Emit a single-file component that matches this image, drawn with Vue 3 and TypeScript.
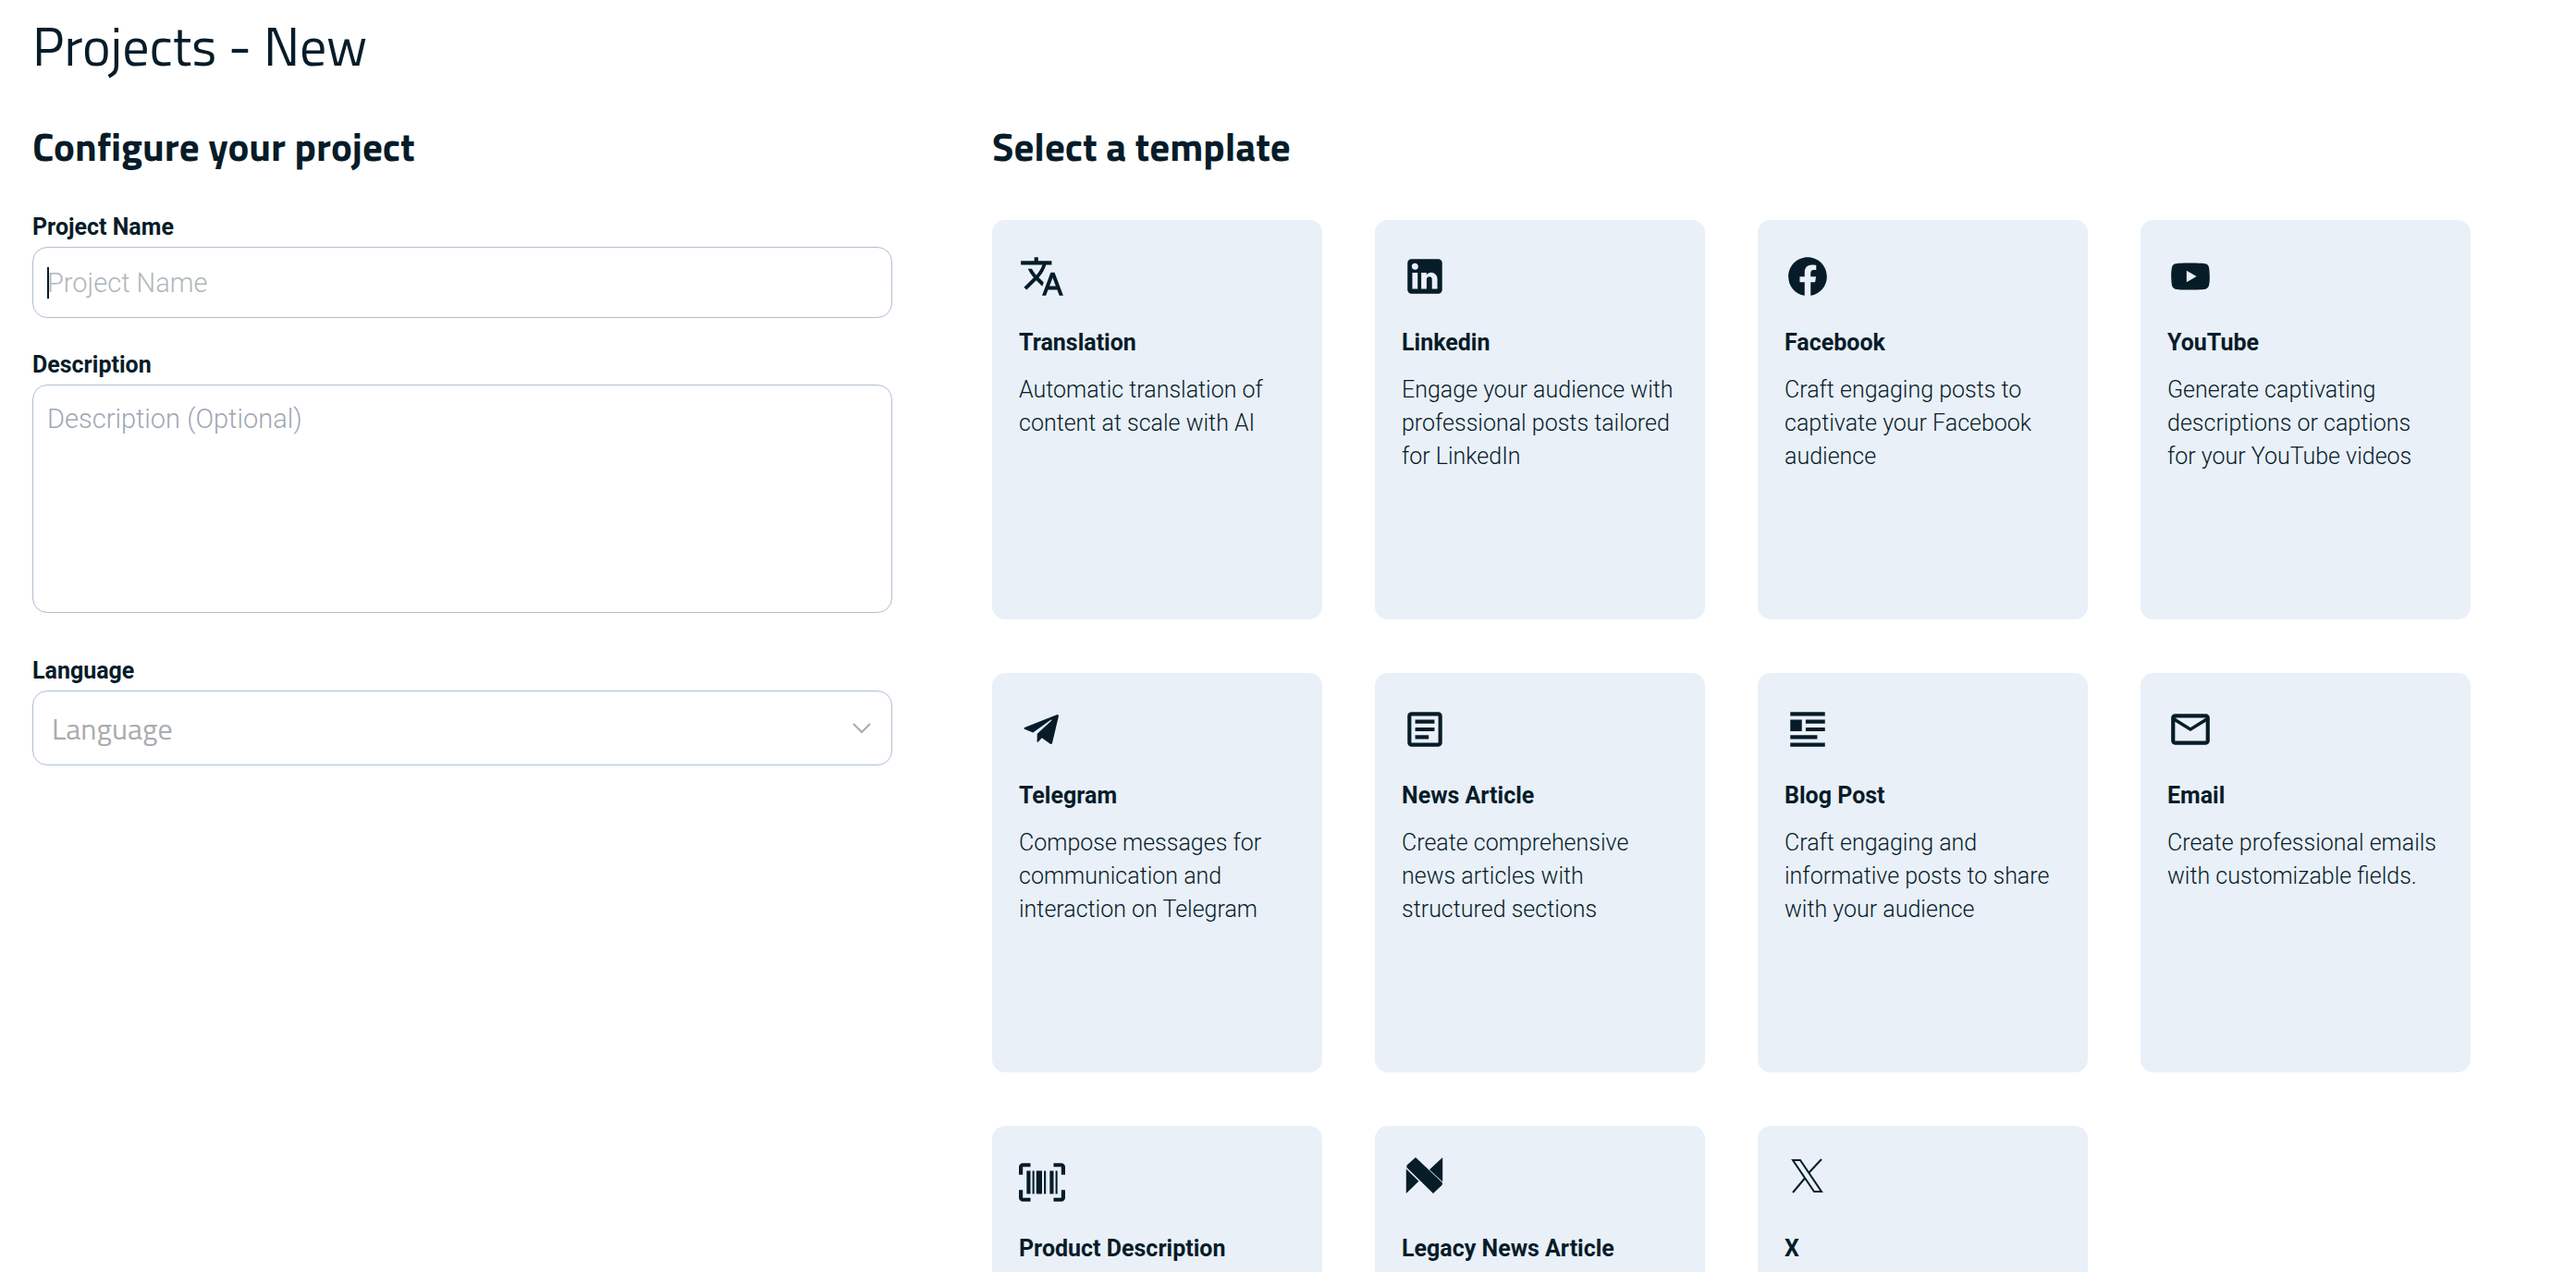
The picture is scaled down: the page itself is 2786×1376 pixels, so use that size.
<script setup lang="ts">
import { ref } from 'vue'

interface Template {
  name: string
  text: string
  icon: string
}

const projectName = ref('')
const description = ref('')
const language = ref('')
const selected = ref('')

const templates: Template[] = [
  { name: 'Translation', text: 'Automatic translation of content at scale with AI', icon: 'translate' },
  { name: 'Linkedin', text: 'Engage your audience with professional posts tailored for LinkedIn', icon: 'linkedin' },
  { name: 'Facebook', text: 'Craft engaging posts to captivate your Facebook audience', icon: 'facebook' },
  { name: 'YouTube', text: 'Generate captivating descriptions or captions for your YouTube videos', icon: 'youtube' },
  { name: 'Telegram', text: 'Compose messages for communication and interaction on Telegram', icon: 'telegram' },
  { name: 'News Article', text: 'Create comprehensive news articles with structured sections', icon: 'article' },
  { name: 'Blog Post', text: 'Craft engaging and informative posts to share with your audience', icon: 'blog' },
  { name: 'Email', text: 'Create professional emails with customizable fields.', icon: 'email' },
  { name: 'Product Description', text: '', icon: 'barcode' },
  { name: 'Legacy News Article', text: '', icon: 'legacy' },
  { name: 'X', text: '', icon: 'x' },
]

// Glyphs on a 24-unit grid
const paths: Record<string, string> = {
  translate:
    'M12.87 15.07l-2.54-2.51.03-.03A17.52 17.52 0 0 0 14.07 6H17V4h-7V2H8v2H1v2h11.17C11.5 7.92 10.44 9.75 9 11.35 8.07 10.32 7.3 9.19 6.69 8h-2c.73 1.63 1.73 3.17 2.98 4.56l-5.09 5.02L4 19l5-5 3.11 3.11.76-2.04M18.5 10h-2L12 22h2l1.12-3h4.75L21 22h2l-4.5-12m-2.62 7l1.62-4.33L19.12 17h-3.24z',
  linkedin:
    'M19 3a2 2 0 0 1 2 2v14a2 2 0 0 1-2 2H5a2 2 0 0 1-2-2V5a2 2 0 0 1 2-2h14m-.5 15.5v-5.3a3.26 3.26 0 0 0-3.26-3.26c-.85 0-1.84.52-2.32 1.3v-1.11h-2.79v8.37h2.79v-4.93c0-.77.62-1.4 1.39-1.4a1.4 1.4 0 0 1 1.4 1.4v4.93h2.79M6.88 8.56a1.68 1.68 0 0 0 1.68-1.68c0-.93-.75-1.69-1.68-1.69a1.69 1.69 0 0 0-1.69 1.69c0 .93.76 1.68 1.69 1.68m1.39 9.94v-8.37H5.5v8.37h2.77z',
  facebook:
    'M12 2.04C6.5 2.04 2 6.53 2 12.06c0 5 3.66 9.15 8.44 9.9v-7H7.9v-2.9h2.54V9.85c0-2.51 1.49-3.89 3.78-3.89 1.09 0 2.23.19 2.23.19v2.47h-1.26c-1.24 0-1.63.77-1.63 1.56v1.88h2.78l-.45 2.9h-2.33v7a10 10 0 0 0 8.44-9.9c0-5.53-4.5-10.02-10-10.02z',
  youtube:
    'M10 15l5.19-3L10 9v6m11.56-7.83c.13.47.22 1.1.28 1.9.07.8.1 1.49.1 2.09L22 12c0 2.19-.16 3.8-.44 4.83-.25.9-.83 1.48-1.73 1.73-.47.13-1.33.22-2.65.28-1.3.07-2.49.1-3.59.1L12 19c-4.19 0-6.8-.16-7.83-.44-.9-.25-1.48-.83-1.73-1.73-.13-.47-.22-1.1-.28-1.9-.07-.8-.1-1.49-.1-2.09L2 12c0-2.19.16-3.8.44-4.83.25-.9.83-1.48 1.73-1.73.47-.13 1.33-.22 2.65-.28 1.3-.07 2.49-.1 3.59-.1L12 5c4.19 0 6.8.16 7.83.44.9.25 1.48.83 1.73 1.73z',
  telegram:
    'M19.6 4.4L2.9 11q-.7.4 0 .9l4.4 1.8 9.2-6.6q.9-.5.3.4L9.5 14.3l-.1 4q.1.7.6.2l1.9-2.1 4.4 3.1q.8.4 1-.4l3.3-14q.1-1-1-.7z',
  article:
    'M19 5v14H5V5h14m0-2H5c-1.1 0-2 .9-2 2v14c0 1.1.9 2 2 2h14c1.1 0 2-.9 2-2V5c0-1.1-.9-2-2-2m-5 14H7v-2h7v2m3-4H7v-2h10v2m0-4H7V7h10v2z',
  blog: 'M3 7h6v6H3V7m0-4h18v2H3V3m8 4h10v2H11V7m0 4h10v2H11v-2m-8 4h14v2H3v-2m0 4h18v2H3v-2z',
  email:
    'M22 6c0-1.1-.9-2-2-2H4c-1.1 0-2 .9-2 2v12c0 1.1.9 2 2 2h16c1.1 0 2-.9 2-2V6m-2 0l-8 5-8-5h16m0 12H4V8l8 5 8-5v10z',
  barcode:
    'M4 6h2v12H4V6m3 0h1v12H7V6m2 0h3v12H9V6m4 0h1v12h-1V6m3 0h2v12h-2V6m3 0h1v12h-1V6M2 4v4H0V4a2 2 0 0 1 2-2h4v2H2m20-2a2 2 0 0 1 2 2v4h-2V4h-4V2h4M2 16v4h4v2H2a2 2 0 0 1-2-2v-4h2m20 4v-4h2v4a2 2 0 0 1-2 2h-4v-2h4z',
}
</script>

<template>
  <main class="page">
    <h1 class="title">Projects - New</h1>
    <div class="columns">
      <form class="config" @submit.prevent>
        <h2 class="heading">Configure your project</h2>
        <div class="field">
          <label for="project-name">Project Name</label>
          <div class="control">
            <input id="project-name" v-model="projectName" type="text" placeholder="Project Name" />
            <span class="caret" aria-hidden="true"></span>
          </div>
        </div>
        <div class="field">
          <label for="description">Description</label>
          <textarea id="description" v-model="description" placeholder="Description (Optional)"></textarea>
        </div>
        <div class="field language">
          <label for="language">Language</label>
          <div class="control">
            <select id="language" v-model="language">
              <option value="" disabled>Language</option>
              <option value="en">English</option>
            </select>
            <svg class="chevron" viewBox="0 0 20 12" aria-hidden="true">
              <path d="M1 1l9 9 9-9" />
            </svg>
          </div>
        </div>
      </form>

      <section class="templates">
        <h2 class="heading">Select a template</h2>
        <div class="grid">
          <button
            v-for="t in templates"
            :key="t.name"
            type="button"
            class="card"
            :aria-pressed="selected === t.name"
            @click="selected = t.name"
          >
            <svg v-if="t.icon === 'legacy'" class="icon" viewBox="0 0 50 50" aria-hidden="true">
              <path d="M15-2L43.500 25q1 1.500 0 3L34 37 5.500 9q-.5-1.500.5-3zM4.800 10.500L18.400 23.800 4.800 37zM44.200-2V24.500L30 11.300z" />
            </svg>
            <svg v-else-if="t.icon === 'x'" class="icon line" viewBox="0 0 50 50" aria-hidden="true">
              <path d="M9 1h8l23 34h-8zM40 0L26 15M22 20.500L9 36" />
            </svg>
            <svg v-else class="icon" viewBox="0 0 24 24" aria-hidden="true">
              <path :d="paths[t.icon]" />
            </svg>
            <span class="name">{{ t.name }}</span>
            <span class="text">{{ t.text }}</span>
          </button>
        </div>
      </section>
    </div>
  </main>
</template>

<style>
body {
  margin: 0;
  background: #fff;
}
</style>

<style scoped>
.page {
  box-sizing: border-box;
  height: 100vh;
  overflow: hidden;
  padding: 12px 114px 0 35px;
  color: #071c29;
  font-family: Roboto, 'Liberation Sans', sans-serif;
}

.title,
.heading {
  margin: 0;
  font-family: 'Titillium Web', Roboto, sans-serif;
}

.title {
  font-size: 58px;
  font-weight: 400;
  line-height: 76px;
}

.heading {
  margin-bottom: 50px;
  font-size: 43px;
  font-weight: 700;
  line-height: 60px;
}

.columns {
  display: grid;
  grid-template-columns: 930fr 1599fr;
  gap: 108px;
  margin-top: 40px;
}

.config .heading {
  margin-bottom: 43px;
}

.field {
  display: flex;
  flex-direction: column;
  gap: 6px;
  margin-bottom: 36px;
}

.field.language {
  margin-top: 48px;
}

label {
  font-size: 25px;
  font-weight: 700;
  line-height: 30px;
}

.control {
  position: relative;
  display: flex;
}

input,
textarea,
select {
  box-sizing: border-box;
  width: 100%;
  margin: 0;
  border: 1px solid #b0bfd0;
  border-radius: 16px;
  outline: none;
  background: #fff;
  color: #071c29;
  font: 300 29px/36px Roboto, 'Liberation Sans', sans-serif;
}

input {
  height: 77px;
  padding: 0 15px;
  caret-color: transparent;
}

textarea {
  height: 247px;
  padding: 18px 15px;
  resize: none;
}

select {
  height: 81px;
  padding: 0 60px 0 20px;
  appearance: none;
  color: #aaabb0;
  font: 400 32px/40px 'Titillium Web', Roboto, sans-serif;
}

input::placeholder {
  color: #b0b6ba;
}

textarea::placeholder {
  color: #a0a7b4;
}

.caret {
  position: absolute;
  top: 22px;
  left: 16px;
  width: 2px;
  height: 34px;
  background: #071c29;
}

.chevron {
  position: absolute;
  top: 35px;
  right: 23px;
  width: 20px;
  height: 12px;
  fill: none;
  stroke: #aaabb0;
  stroke-width: 2;
}

.grid {
  display: grid;
  grid-template-columns: repeat(4, 1fr);
  gap: 58px 57px;
}

.card {
  display: flex;
  flex-direction: column;
  align-items: flex-start;
  justify-content: flex-start;
  height: 432px;
  padding: 36px 29px;
  border: 0;
  border-radius: 14px;
  background: #e9f0f8;
  color: inherit;
  font-family: inherit;
  font-size: 25px;
  line-height: 36px;
  text-align: left;
  cursor: pointer;
}

.icon {
  flex: none;
  width: 50px;
  height: 50px;
  margin-bottom: 29px;
  overflow: visible;
  fill: currentColor;
}

.icon.line {
  fill: none;
  stroke: currentColor;
  stroke-width: 2;
}

.name {
  margin-bottom: 15px;
  font-weight: 700;
}

.text {
  font-weight: 300;
}
</style>
